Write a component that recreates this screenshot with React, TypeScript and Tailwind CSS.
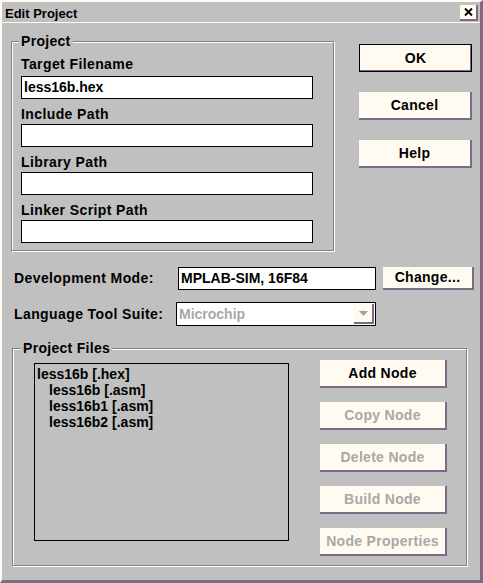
const FONT = "font-['Liberation_Sans',Arial,sans-serif]";

const Btn = ({
  label,
  w,
  h,
  disabled,
  isDefault,
}: {
  label: string;
  w: string;
  h: string;
  disabled?: boolean;
  isDefault?: boolean;
}) => {
  if (isDefault) {
    return (
      <div
        className={`${w} ${h} flex items-center justify-center bg-[#fffbf0] border border-black shadow-[inset_-1px_-1px_0_#7b6b84] text-[14px] tracking-[0.3px]`}
      >
        {label}
      </div>
    );
  }
  return (
    <div
      className={`${w} ${h} flex items-center justify-center bg-[#fffbf0] border-r-2 border-b-2 border-[#7b6b84] text-[14px] tracking-[0.3px] ${
        disabled ? "text-[#a8a8a8]" : "text-black"
      }`}
    >
      {label}
    </div>
  );
};

const Field = ({
  label,
  value,
  first,
}: {
  label: string;
  value?: string;
  first?: boolean;
}) => {
  return (
    <>
      <div
        className={`h-[16px] leading-[16px] text-[14px] tracking-[0.4px] ${
          first ? "mb-[4px]" : "mb-[2px]"
        }`}
      >
        {label}
      </div>
      <div className="w-[292px] h-[23px] mb-[7px] bg-white border border-black flex items-center pl-[2px] text-[14px]">
        {value}
      </div>
    </>
  );
};

export default function App() {
  return (
    <div
      className={`${FONT} font-bold text-black w-[483px] h-[583px] bg-[#c0c0c0] border-l-2 border-t-2 border-[#fffbf0] border-r-[3px] border-b-[3px] border-r-[#7b6b84] border-b-[#7b6b84]`}
    >
      {/* title bar */}
      <div className="h-[21px] flex items-start justify-between pl-[3px] pr-[2px] border-b border-[#fffbf0]">
        <span className="text-[13px] leading-[16px] mt-[4px]">Edit Project</span>
        <div className="mt-[3px] w-[18px] h-[16px] bg-[#fffbf0] border-r-2 border-b-2 border-[#7b6b84] flex items-center justify-center">
          <svg width="9" height="8" viewBox="0 0 9 8">
            <path d="M1 0.5 L8 7.5 M8 0.5 L1 7.5" stroke="#000" strokeWidth="2" />
          </svg>
        </div>
      </div>

      <div className="pl-[9px] pt-[10px]">
        {/* project group + dialog buttons */}
        <div className="flex">
          <fieldset className="w-[323px] border border-[#808080] shadow-[1px_1px_0_#fff,inset_1px_1px_0_#fff]">
            <legend className="ml-[7px] px-[2px] bg-[#c0c0c0] leading-[16px] text-[14px] tracking-[0.3px]">
              Project
            </legend>
            <div className="pl-[9px] pt-[7px] flex flex-col">
              <Field label="Target Filename" value="less16b.hex" first />
              <Field label="Include Path" />
              <Field label="Library Path" />
              <Field label="Linker Script Path" />
            </div>
          </fieldset>
          <div className="ml-[25px] mt-[11px] flex flex-col gap-[20px]">
            <Btn label="OK" w="w-[113px]" h="h-[28px]" isDefault />
            <Btn label="Cancel" w="w-[113px]" h="h-[28px]" />
            <Btn label="Help" w="w-[113px]" h="h-[28px]" />
          </div>
        </div>

        {/* development mode */}
        <div className="mt-[16px] flex items-center">
          <div className="w-[167px] pl-[3px] text-[14px] tracking-[0.4px]">
            Development Mode:
          </div>
          <div className="w-[198px] h-[23px] bg-white border border-black flex items-center pl-[2px] text-[14px]">
            MPLAB-SIM, 16F84
          </div>
          <div className="ml-[7px]">
            <Btn label="Change..." w="w-[91px]" h="h-[23px]" />
          </div>
        </div>

        {/* language tool suite */}
        <div className="mt-[12px] flex items-center">
          <div className="w-[165px] pl-[3px] text-[14px] tracking-[0.4px]">
            Language Tool Suite:
          </div>
          <div className="w-[200px] h-[24px] bg-white border border-black flex items-center justify-between pl-[2px] pr-[1px] text-[14px] text-[#a8a8a8]">
            <span>Microchip</span>
            <div className="w-[20px] h-[20px] bg-[#fffbf0] border-r-2 border-b-2 border-[#7b6b84] flex items-center justify-center">
              <svg width="9" height="5" viewBox="0 0 9 5">
                <path d="M0 0 H9 L4.5 5 Z" fill="#a0a0a0" />
              </svg>
            </div>
          </div>
        </div>

        {/* project files */}
        <fieldset className="mt-[14px] ml-[1px] w-[455px] border border-[#808080] shadow-[1px_1px_0_#fff,inset_1px_1px_0_#fff]">
          <legend className="ml-[8px] px-[2px] bg-[#c0c0c0] leading-[16px] text-[14px] tracking-[0.3px]">
            Project Files
          </legend>
          <div className="flex items-start pl-[21px] pt-[4px] pb-[9px]">
            <div className="mt-[3px] w-[255px] h-[178px] border border-black pl-[2px] pt-[2px] text-[14px] leading-[16px]">
              <div>less16b [.hex]</div>
              <div className="pl-[12px]">less16b [.asm]</div>
              <div className="pl-[12px]">less16b1 [.asm]</div>
              <div className="pl-[12px]">less16b2 [.asm]</div>
            </div>
            <div className="ml-[31px] flex flex-col gap-[14px]">
              <Btn label="Add Node" w="w-[127px]" h="h-[28px]" />
              <Btn label="Copy Node" w="w-[127px]" h="h-[28px]" disabled />
              <Btn label="Delete Node" w="w-[127px]" h="h-[28px]" disabled />
              <Btn label="Build Node" w="w-[127px]" h="h-[28px]" disabled />
              <Btn label="Node Properties" w="w-[127px]" h="h-[28px]" disabled />
            </div>
          </div>
        </fieldset>
      </div>
    </div>
  );
}
